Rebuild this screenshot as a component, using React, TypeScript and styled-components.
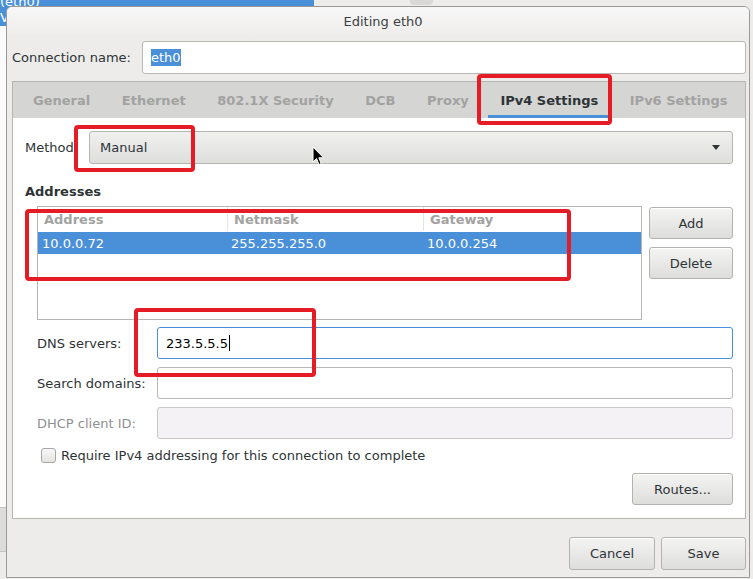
import React from 'react';
import styled, { createGlobalStyle } from 'styled-components';

const GlobalStyle = createGlobalStyle`
  html, body {
    margin: 0;
    padding: 0;
  }
  body {
    width: 753px;
    height: 579px;
    overflow: hidden;
    background: #edecea;
    font-family: "DejaVu Sans", "Liberation Sans", sans-serif;
    font-size: 13px;
    color: #2e3436;
  }
`;

const Desktop = styled.div`
  position: relative;
  width: 753px;
  height: 579px;
  overflow: hidden;
`;

// window behind the dialog (only its edges show)
const BackWindow = styled.div`
  position: absolute;
  left: 0;
  top: 0;
  width: 753px;
  height: 579px;
  display: flex;
  flex-direction: column;
`;

const BackSelectedRow = styled.div`
  width: 314px;
  height: 32px;
  background: #4a90d9;
  color: #fff;
  line-height: 16px;
  margin-top: -6px;
  white-space: nowrap;
  overflow: hidden;
`;

const BackList = styled.div`
  width: 6px;
  height: 481px;
  background: #fbfbfb;
`;

const BackButton = styled.div`
  width: 6px;
  height: 43px;
  background: #dcdcdb;
  border-top: 1px solid #c4c4c2;
  border-bottom: 1px solid #c4c4c2;
`;

const BackTab = styled.div`
  position: absolute;
  left: 410px;
  top: 0;
  width: 23px;
  height: 5px;
  background: #d9d8d6;
  border-radius: 0 0 4px 4px;
`;

const Dialog = styled.div`
  position: absolute;
  left: 6px;
  top: 6px;
  width: 744px;
  height: 572px;
  box-sizing: border-box;
  border: 1px solid #9a9997;
  border-radius: 6px 6px 0 0;
  background: #edecea;
  display: flex;
  flex-direction: column;
  overflow: hidden;
`;

const TitleBar = styled.div`
  height: 29px;
  flex: none;
  display: flex;
  align-items: center;
  justify-content: center;
  padding-left: 10px;
  background: linear-gradient(#f8f7f8, #eeedeb);
  color: #3b3e40;
`;

const Content = styled.div`
  flex: 1;
  display: flex;
  flex-direction: column;
  padding: 5px 3px 0 5px;
`;

const ConnRow = styled.div`
  display: flex;
  align-items: center;
  height: 33px;
`;

const ConnLabel = styled.div`
  width: 130px;
  flex: none;
`;

const Entry = styled.div<{ $focused?: boolean; $disabled?: boolean }>`
  flex: 1;
  height: 100%;
  box-sizing: border-box;
  border: 1px solid ${(p) => (p.$focused ? '#4a90d9' : p.$disabled ? '#c9c8c6' : '#b9b8b5')};
  border-radius: 3px;
  background: ${(p) => (p.$disabled ? '#f4f2f4' : '#fff')};
  display: flex;
  align-items: center;
  padding-left: 8px;
  color: #000;
`;

const Selected = styled.span`
  background: #4a90d9;
  color: #fff;
  padding: 1px 0;
`;

const Caret = styled.span`
  display: inline-block;
  width: 1px;
  height: 16px;
  background: #000;
  margin-left: 1px;
`;

const Notebook = styled.div`
  margin-top: 7px;
  border: 1px solid #b6b5b2;
  display: flex;
  flex-direction: column;
`;

const TabBar = styled.div`
  height: 36px;
  background: #d5d5d4;
  display: flex;
  gap: 7.6px;
  padding-left: 8px;
  padding-bottom: 1px;
  box-sizing: border-box;
`;

const Tab = styled.div<{ $active?: boolean }>`
  padding: 0 12px;
  display: flex;
  align-items: center;
  font-weight: bold;
  color: ${(p) => (p.$active ? '#2e3436' : '#a2a2a1')};
  box-shadow: ${(p) => (p.$active ? 'inset 0 -3px #4a90d9' : 'none')};
  margin-bottom: -1px;
`;

const Page = styled.div`
  background: #fff;
  padding: 13px 12px 13px 12px;
  display: flex;
  flex-direction: column;
`;

const MethodRow = styled.div`
  display: flex;
  align-items: center;
  height: 33px;
`;

const MethodLabel = styled.div`
  width: 64px;
  flex: none;
`;

const Combo = styled.div`
  flex: 1;
  height: 100%;
  box-sizing: border-box;
  border: 1px solid #b6b5b2;
  border-radius: 3px;
  background: linear-gradient(#f0f0ef, #dededd);
  display: flex;
  align-items: center;
  justify-content: space-between;
  padding: 0 12px 0 10px;
`;

const ComboArrow = styled.span`
  width: 0;
  height: 0;
  border-left: 4px solid transparent;
  border-right: 4px solid transparent;
  border-top: 5px solid #2e3436;
`;

const SectionTitle = styled.div`
  font-weight: bold;
  line-height: 16px;
  margin-top: 20px;
`;

const AddressBlock = styled.div`
  margin-top: 6px;
  padding-left: 12px;
  display: flex;
  gap: 7px;
`;

const Tree = styled.div`
  flex: 1;
  height: 114px;
  box-sizing: border-box;
  border: 1px solid #b6b5b2;
  background: #fff;
`;

const TreeRow = styled.div<{ $header?: boolean }>`
  display: grid;
  grid-template-columns: 189px 196px 1fr;
  height: ${(p) => (p.$header ? '24px' : '22px')};
  margin-bottom: ${(p) => (p.$header ? '1px' : '0')};
  background: ${(p) => (p.$header ? '#fff' : '#4a90d9')};
  color: ${(p) => (p.$header ? '#a3a3a2' : '#fff')};
  font-weight: ${(p) => (p.$header ? 'bold' : 'normal')};
`;

const Cell = styled.div<{ $header?: boolean; $first?: boolean }>`
  display: flex;
  align-items: center;
  padding-left: ${(p) => (p.$header ? '6px' : '4px')};
  border-left: ${(p) => (p.$header && !p.$first ? '1px solid #e4e4e3' : 'none')};
  white-space: nowrap;
`;

const SideButtons = styled.div`
  width: 84px;
  padding-top: 1px;
  display: flex;
  flex-direction: column;
  gap: 8px;
`;

const Button = styled.button<{ $w?: number; $h?: number }>`
  width: ${(p) => (p.$w ? `${p.$w}px` : '100%')};
  height: ${(p) => p.$h || 32}px;
  box-sizing: border-box;
  border: 1px solid #b3b2af;
  border-radius: 3px;
  background: linear-gradient(#f4f4f3, #dddddc);
  box-shadow: inset 0 1px rgba(255, 255, 255, 0.8);
  font-family: "DejaVu Sans", "Liberation Sans", sans-serif;
  font-size: 13px;
  color: #2e3436;
  padding: 0;
`;

const Form = styled.div`
  margin-top: 7px;
  padding-left: 12px;
  display: grid;
  grid-template-columns: 120px 1fr;
  grid-auto-rows: 32px;
  row-gap: 8px;
`;

const FormLabel = styled.div<{ $disabled?: boolean }>`
  display: flex;
  align-items: center;
  color: ${(p) => (p.$disabled ? '#8e9192' : '#2e3436')};
`;

const CheckRow = styled.label`
  margin-top: 9px;
  padding-left: 16px;
  display: flex;
  align-items: center;
  gap: 5px;
  height: 15px;
`;

const CheckBox = styled.span`
  width: 15px;
  height: 15px;
  box-sizing: border-box;
  border: 1px solid #a9a8a6;
  border-radius: 3px;
  background: linear-gradient(#f7f7f7, #e4e4e3);
`;

const RoutesRow = styled.div`
  margin-top: 10px;
  display: flex;
  justify-content: flex-end;
`;

const ActionRow = styled.div`
  margin-top: 18px;
  display: flex;
  justify-content: flex-end;
  gap: 6px;
`;

const Annotation = styled.div<{ $x: number; $y: number; $w: number; $h: number }>`
  position: absolute;
  left: ${(p) => p.$x}px;
  top: ${(p) => p.$y}px;
  width: ${(p) => p.$w}px;
  height: ${(p) => p.$h}px;
  box-sizing: border-box;
  border: 4px solid #e51c25;
  border-radius: 4px;
  pointer-events: none;
`;

const Pointer = styled.svg`
  position: absolute;
  left: 312px;
  top: 146px;
`;

const tabs = ['General', 'Ethernet', '802.1X Security', 'DCB', 'Proxy', 'IPv4 Settings', 'IPv6 Settings'];

export default function App() {
  return (
    <Desktop>
      <GlobalStyle />
      <BackWindow>
        <BackSelectedRow>
          (eth0)
          <br />
          Vi
        </BackSelectedRow>
        <BackList />
        <BackButton />
      </BackWindow>
      <BackTab />

      <Dialog>
        <TitleBar>Editing eth0</TitleBar>
        <Content>
          <ConnRow>
            <ConnLabel>Connection name:</ConnLabel>
            <Entry>
              <Selected>eth0</Selected>
            </Entry>
          </ConnRow>

          <Notebook>
            <TabBar>
              {tabs.map((t) => (
                <Tab key={t} $active={t === 'IPv4 Settings'}>
                  {t}
                </Tab>
              ))}
            </TabBar>
            <Page>
              <MethodRow>
                <MethodLabel>Method</MethodLabel>
                <Combo>
                  <span>Manual</span>
                  <ComboArrow />
                </Combo>
              </MethodRow>

              <SectionTitle>Addresses</SectionTitle>
              <AddressBlock>
                <Tree>
                  <TreeRow $header>
                    <Cell $header $first>Address</Cell>
                    <Cell $header>Netmask</Cell>
                    <Cell $header>Gateway</Cell>
                  </TreeRow>
                  <TreeRow>
                    <Cell>10.0.0.72</Cell>
                    <Cell>255.255.255.0</Cell>
                    <Cell>10.0.0.254</Cell>
                  </TreeRow>
                </Tree>
                <SideButtons>
                  <Button>Add</Button>
                  <Button>Delete</Button>
                </SideButtons>
              </AddressBlock>

              <Form>
                <FormLabel>DNS servers:</FormLabel>
                <Entry $focused>
                  233.5.5.5
                  <Caret />
                </Entry>
                <FormLabel>Search domains:</FormLabel>
                <Entry />
                <FormLabel $disabled>DHCP client ID:</FormLabel>
                <Entry $disabled />
              </Form>

              <CheckRow>
                <CheckBox />
                Require IPv4 addressing for this connection to complete
              </CheckRow>

              <RoutesRow>
                <Button $w={101}>Routes...</Button>
              </RoutesRow>
            </Page>
          </Notebook>

          <ActionRow>
            <Button $w={86} $h={33}>Cancel</Button>
            <Button $w={85} $h={33}>Save</Button>
          </ActionRow>
        </Content>
      </Dialog>

      <Annotation $x={477} $y={74} $w={135} $h={51} />
      <Annotation $x={74} $y={125} $w={121} $h={47} />
      <Annotation $x={25} $y={209} $w={546} $h={72} />
      <Annotation $x={134} $y={308} $w={182} $h={69} />

      <Pointer width="13" height="20" viewBox="0 0 13 20">
        <path d="M1 1 L1 16 L4.5 12.5 L7 18.5 L9.2 17.6 L6.8 11.8 L11.5 11.8 Z" fill="#000" stroke="#fff" strokeWidth="1" />
      </Pointer>
    </Desktop>
  );
}
